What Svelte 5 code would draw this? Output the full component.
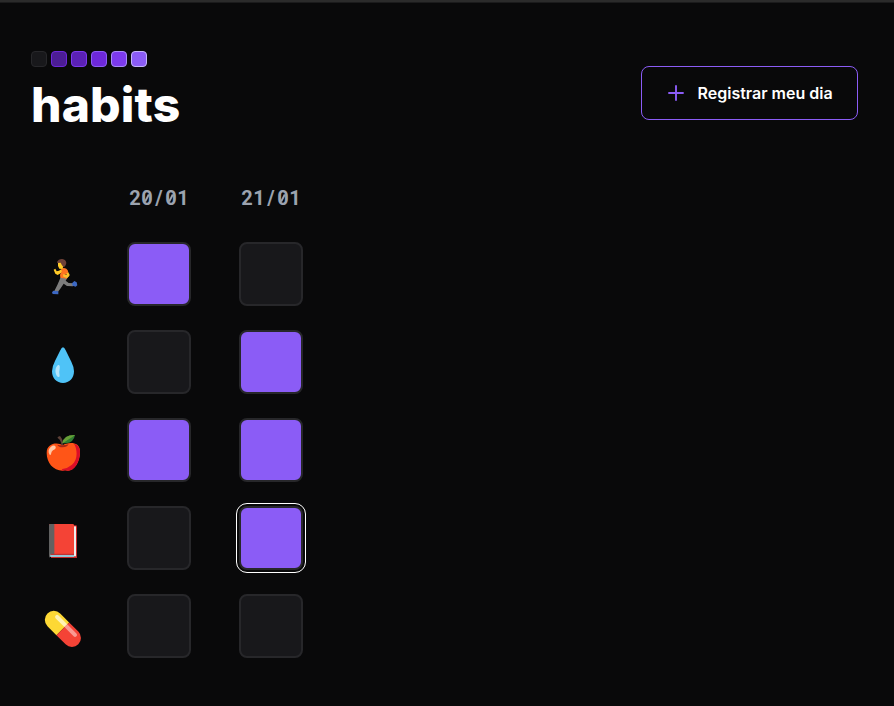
<script>
  const levels = ['none', 'l1', 'l2', 'l3', 'l4', 'l5'];
  const dates = ['20/01', '21/01'];
  const habits = [
    { id: 'run', box: '-12 -9 192 192', days: [true, false] },
    { id: 'water', box: '-12 -15 192 192', days: [false, true] },
    { id: 'apple', box: '-12 -21 192 192', days: [true, true] },
    { id: 'book', box: '-12 -12 192 192', days: [false, true] },
    { id: 'pill', box: '-12 -18 192 192', days: [false, false] }
  ];
  let rows = $state(habits);
  let focused = $state('book-1');

  function toggle(r, d) {
    rows[r].days[d] = !rows[r].days[d];
    focused = `${rows[r].id}-${d}`;
  }
</script>

<main>
  <header>
    <div class="brand">
      <div class="levels">
        {#each levels as level}<i class={level}></i>{/each}
      </div>
      <h1>habits</h1>
    </div>
    <button class="register">
      <svg width="16" height="16" viewBox="0 0 16 16"><path d="M8 1v14M1 8h14" fill="none" stroke="#8b5cf6" stroke-width="1.9" stroke-linecap="round" /></svg>
      <span>Registrar meu dia</span>
    </button>
  </header>

  <section>
    <div class="row dates">
      {#each dates as date}
        <div class="date">{#each date.split('') as ch}<span class:zero={ch === '0'}>{ch}</span>{/each}</div>
      {/each}
    </div>
    {#each rows as habit, r}
      <div class="row">
        <svg class="icon" viewBox={habit.box}>
          {#if habit.id === 'run'}
            <path d="M79 92 99 96 92 107 101 114 115 115 114 124 96 123 86 116 77 130 69 140 58 138 67 120Z" fill="#7c7c7c" />
            <path d="M55 137 70 139 70 148 53 147 51 142ZM111 115 118 108 125 112 127 121 122 125 113 122Z" fill="#3c68c4" />
            <path d="M56 74 61 71 65 79 72 77 80 72 82 82 68 90 61 86ZM98 77 104 91 97 98 85 98 87 92 95 90 91 80Z" fill="#ffca28" />
            <path d="M79 70Q94 66 99 78L99 83 91 88 96 94 96 101 76 98 75 89 80 80Z" fill="#ff7521" />
            <path d="M84 88 97 90 103 86 102 94 95 99 85 95Z" fill="#fbc02d" />
            <path d="M69 49H86V63L82 72 73 71 69 63Z" fill="#ffca28" />
            <path d="M66 51Q71 41 82 42 93 44 94 54 91 67 85 66L80 59 77 53 67 54Z" fill="#6d4037" />
          {:else if habit.id === 'water'}
            <path d="M84 37Q88 37 92 46L109 80Q117 96 117 109C117 130 103 144 84 144S51 130 51 109Q51 95 60 78L76 46Q80 37 84 37Z" fill="#4fc3f7" />
            <path d="M69 90Q76 88 74 101 71 111 74 123 73 128 68 125C60 119 58 98 69 90Z" fill="#b3e5fc" />
          {:else if habit.id === 'apple'}
            <path d="M83 61C97 52 135 47 135 80C135 112 117 137 99 137Q90 134 83 137C54 137 35 113 35 84C35 52 70 51 83 61Z" fill="#ff5517" />
            <path d="M117 56C126 69 131 103 111 119Q98 130 82 132L79 137Q90 134 99 137C119 137 135 109 135 80Q134 60 117 56Z" fill="#dc0d28" />
            <path d="M67 59Q83 63 101 58 96 67 83 67 69 66 67 59Z" fill="#a52714" />
            <path d="M68 36 75 33Q85 44 84 60L79 61Q79 46 68 39Z" fill="#5d4037" />
            <path d="M82 55Q87 29 120 30 116 52 94 55Z" fill="#2e7d32" />
            <path d="M82 54Q87 29 120 30 108 39 84 54Z" fill="#689f38" />
            <path d="M44 89Q36 77 47 66 57 58 62 65 64 71 54 76 49 79 48 87Q47 91 44 89Z" fill="#ffc7a5" />
          {:else if habit.id === 'book'}
            <path d="M48 46H122Q126 46 126 50V144H48Z" fill="#c62828" />
            <path d="M51 49H123V139H51Z" fill="#eee" />
            <path d="M43 132H117V141H46Z" fill="#94c6d6" />
            <path d="M42 46Q42 42 46 42H113Q117 42 117 46V134H42Z" fill="#f44336" />
            <path d="M46 42H58V133H48Q45 133 45 143 42 142 42 137V46Q42 42 46 42Z" fill="#616161" />
            <path d="M48 133H117" stroke="#b92b2b" stroke-width="3" />
          {:else}
            <g transform="translate(84 87) rotate(45)">
              <path d="M-22 -27H-39A27 27 0 0 0 -39 27H-1V-27Z" fill="#fdd835" />
              <path d="M-1 -27H38A27 27 0 0 1 38 27H-1Z" fill="#f44336" />
              <path d="M-38 -19H-1V-7H-38A6 6 0 0 1 -38 -19Z" fill="#fff2b5" />
              <path d="M-1 -19H38A6 6 0 0 1 38 -7H-1Z" fill="#fa9992" />
            </g>
          {/if}
        </svg>
        <div class="days">
          {#each habit.days as done, d}
            <button class="day" class:done class:focused={focused === `${habit.id}-${d}`} aria-label={dates[d]} onclick={() => toggle(r, d)}></button>
          {/each}
        </div>
      </div>
    {/each}
  </section>
</main>

<style>
  :global(body) { background: #09090a; overflow: hidden; }
  main {
    box-sizing: border-box;
    height: 706px;
    border-top: 2px solid #2b2b2b;
    box-shadow: inset 0 1px #1b1b1c;
    padding: 49px 36px 0 31px;
    background: #09090a;
    color: #fff;
    font-family: Inter, sans-serif;
  }
  header { display: flex; justify-content: space-between; height: 128px; }
  .levels { display: flex; gap: 4px; }
  .levels i { box-sizing: border-box; width: 16px; height: 16px; border: 1px solid; border-radius: 4px; }
  .none { background: #18181b; border-color: #27272a !important; }
  .l1 { background: #4c1d95; border-color: #6d28d9 !important; }
  .l2 { background: #5b21b6; border-color: #7c3aed !important; }
  .l3 { background: #6d28d9; border-color: #8b5cf6 !important; }
  .l4 { background: #7c3aed; border-color: #a78bfa !important; }
  .l5 { background: #8b5cf6; border-color: #c4b5fd !important; }
  h1 { margin: 8px 0 0; font-size: 48px; line-height: 60px; font-weight: 800; letter-spacing: 0.15px; }
  .register {
    display: flex;
    align-items: center;
    gap: 13.5px;
    box-sizing: border-box;
    width: 217px;
    height: 54px;
    margin-top: 15px;
    padding: 0 0 0 26px;
    border: 1px solid #8b5cf6;
    border-radius: 8px;
    background: none;
    color: #fff;
    font: 600 16px/24px Inter, sans-serif;
    white-space: nowrap;
  }
  section { display: flex; flex-direction: column; gap: 24px; }
  .row { display: flex; gap: 32px; height: 64px; }
  .dates { height: 39px; gap: 52px; padding-left: 98px; }
  .date { display: flex; height: 38px; font: 700 20px/38px Roboto, sans-serif; color: #9ca3af; }
  .date span { position: relative; width: 12px; text-align: center; }
  .zero::after {
    content: '';
    position: absolute;
    left: 5.3px;
    top: 15px;
    width: 1.5px;
    height: 8px;
    background: #9ca3af;
    transform: rotate(28deg);
  }
  .icon { width: 64px; height: 64px; }
  .days { display: flex; gap: 48px; }
  .day {
    box-sizing: border-box;
    width: 64px;
    height: 64px;
    padding: 0;
    border: 2px solid #27272a;
    border-radius: 8px;
    background: #18181b;
  }
  .done { background: #8b5cf6; }
  .focused { outline: 1px solid #fff; outline-offset: 2px; }
</style>
